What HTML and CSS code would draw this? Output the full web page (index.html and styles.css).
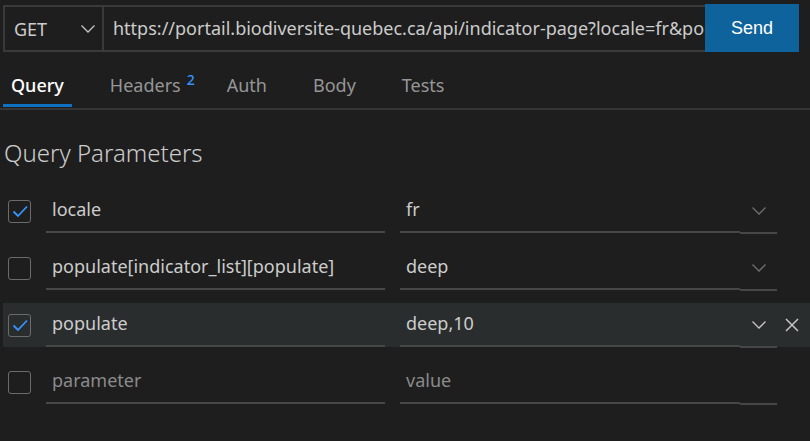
FILE: index.html
```html
<!DOCTYPE html>
<html>
<head>
<meta charset="utf-8">
<link rel="stylesheet" href="styles.css">
</head>
<body>
<div class="topbar">
  <div class="method">
    <span>GET</span>
    <svg class="chev" width="16" height="10" viewBox="0 0 16 10"><path d="M1.5 1.5 L8 8 L14.5 1.5" fill="none" stroke="#c5c5c5" stroke-width="1.3"/></svg>
  </div>
  <div class="url">https://portail.biodiversite-quebec.ca/api/indicator-page?locale=fr&amp;populate</div>
  <button class="send">Send</button>
</div>
<div class="tabs">
  <div class="tab active">Query</div>
  <div class="tab">Headers<sup class="badge">2</sup></div>
  <div class="tab">Auth</div>
  <div class="tab">Body</div>
  <div class="tab">Tests</div>
</div>
<h2 class="title">Query Parameters</h2>
<div class="params">
  <div class="row">
    <div class="cb checked"><svg width="20" height="20" viewBox="0 0 20 20"><path d="M3.5 10.5 L8 15 L17 5.5" fill="none" stroke="#3794ff" stroke-width="1.8"/></svg></div>
    <div class="field name">locale</div>
    <div class="field value">fr</div>
    <div class="dd"><svg width="16" height="10" viewBox="0 0 16 10"><path d="M1.5 1.5 L8 8 L14.5 1.5" fill="none" stroke="#6e6e6e" stroke-width="1.3"/></svg></div>
    <div class="del"></div>
  </div>
  <div class="row">
    <div class="cb"></div>
    <div class="field name">populate[indicator_list][populate]</div>
    <div class="field value">deep</div>
    <div class="dd"><svg width="16" height="10" viewBox="0 0 16 10"><path d="M1.5 1.5 L8 8 L14.5 1.5" fill="none" stroke="#6e6e6e" stroke-width="1.3"/></svg></div>
    <div class="del"></div>
  </div>
  <div class="row hover">
    <div class="cb checked"><svg width="20" height="20" viewBox="0 0 20 20"><path d="M3.5 10.5 L8 15 L17 5.5" fill="none" stroke="#3794ff" stroke-width="1.8"/></svg></div>
    <div class="field name">populate</div>
    <div class="field value">deep,10</div>
    <div class="dd"><svg width="16" height="10" viewBox="0 0 16 10"><path d="M1.5 1.5 L8 8 L14.5 1.5" fill="none" stroke="#c5c5c5" stroke-width="1.3"/></svg></div>
    <div class="del"><svg width="16" height="16" viewBox="0 0 16 16"><path d="M2 2 L14 14 M14 2 L2 14" fill="none" stroke="#c5c5c5" stroke-width="1.5"/></svg></div>
  </div>
  <div class="row">
    <div class="cb"></div>
    <div class="field name placeholder">parameter</div>
    <div class="field value placeholder">value</div>
    <div class="dd"></div>
    <div class="del"></div>
  </div>
</div>
</body>
</html>
```
FILE: styles.css
```css
* { box-sizing: border-box; }
body {
  margin: 0;
  background: #1e1e1e;
  font-family: "Noto Sans", sans-serif;
  color: #cccccc;
  width: 810px;
  height: 441px;
  overflow: hidden;
}
.topbar {
  display: flex;
  height: 48px;
  margin-top: 4px;
  padding-left: 3px;
}
.method {
  width: 101px;
  margin-top: 1px;
  height: 47px;
  border: 2px solid #3a3a3a;
  display: flex;
  align-items: center;
  justify-content: space-between;
  padding: 0 6px 0 9px;
  font-size: 18px;
  color: #cccccc;
}
.url {
  width: 601px;
  margin-top: 1px;
  height: 47px;
  border-top: 2px solid #3a3a3a;
  border-bottom: 2px solid #3a3a3a;
  padding-left: 9px;
  font-size: 18px;
  line-height: 42px;
  white-space: nowrap;
  overflow: hidden;
  color: #cccccc;
}
.send {
  width: 94px;
  height: 48px;
  border: none;
  background: #0e639c;
  color: #ffffff;
  font-family: "Liberation Sans", Arial, sans-serif;
  font-size: 18px;
  padding: 0;
}
.tabs {
  display: flex;
  margin-top: 18px;
  padding-left: 3px;
  border-bottom: 2px solid #353535;
  height: 40px;
}
.tab {
  font-size: 18px;
  color: #969696;
  padding: 0 8px;
  margin-right: 30px;
  line-height: 30px;
  height: 38px;
  position: relative;
}
.tab.active {
  color: #ffffff;
  font-weight: 500;
  border-bottom: 3px solid #0e70c0;
  height: 37px;
}
.badge {
  position: absolute;
  top: 0;
  right: -6px;
  color: #3794ff;
  font-size: 14px;
  font-weight: 500;
  line-height: 20px;
}
.title {
  margin: 26px 0 0 4px;
  font-size: 24px;
  font-weight: 300;
  color: #cccccc;
  line-height: 34px;
}
.params {
  margin-top: 19px;
  padding-left: 3px;
}
.row {
  display: flex;
  align-items: center;
  height: 44px;
  margin-bottom: 13px;
}
.row.hover { background: #2a2d2e; }
.cb {
  width: 23px;
  height: 23px;
  margin-left: 5px;
  border: 1px solid #6b6b6b;
  border-radius: 3px;
  display: flex;
  align-items: center;
  justify-content: center;
}
.field {
  height: 44px;
  padding-left: 6px;
  border-bottom: 2px solid #474747;
  font-size: 18px;
  line-height: 40px;
  color: #cccccc;
  white-space: nowrap;
}
.field.name { width: 339px; margin-left: 15px; }
.field.value { width: 340px; margin-left: 15px; }
.placeholder { color: #8b8b8b; }
.dd {
  width: 37px;
  height: 46px;
  border-bottom: 2px solid #474747;
  display: flex;
  align-items: center;
  justify-content: center;
  padding-top: 2px;
}
.del {
  width: 30px;
  height: 44px;
  display: flex;
  align-items: center;
  justify-content: center;
}
```
